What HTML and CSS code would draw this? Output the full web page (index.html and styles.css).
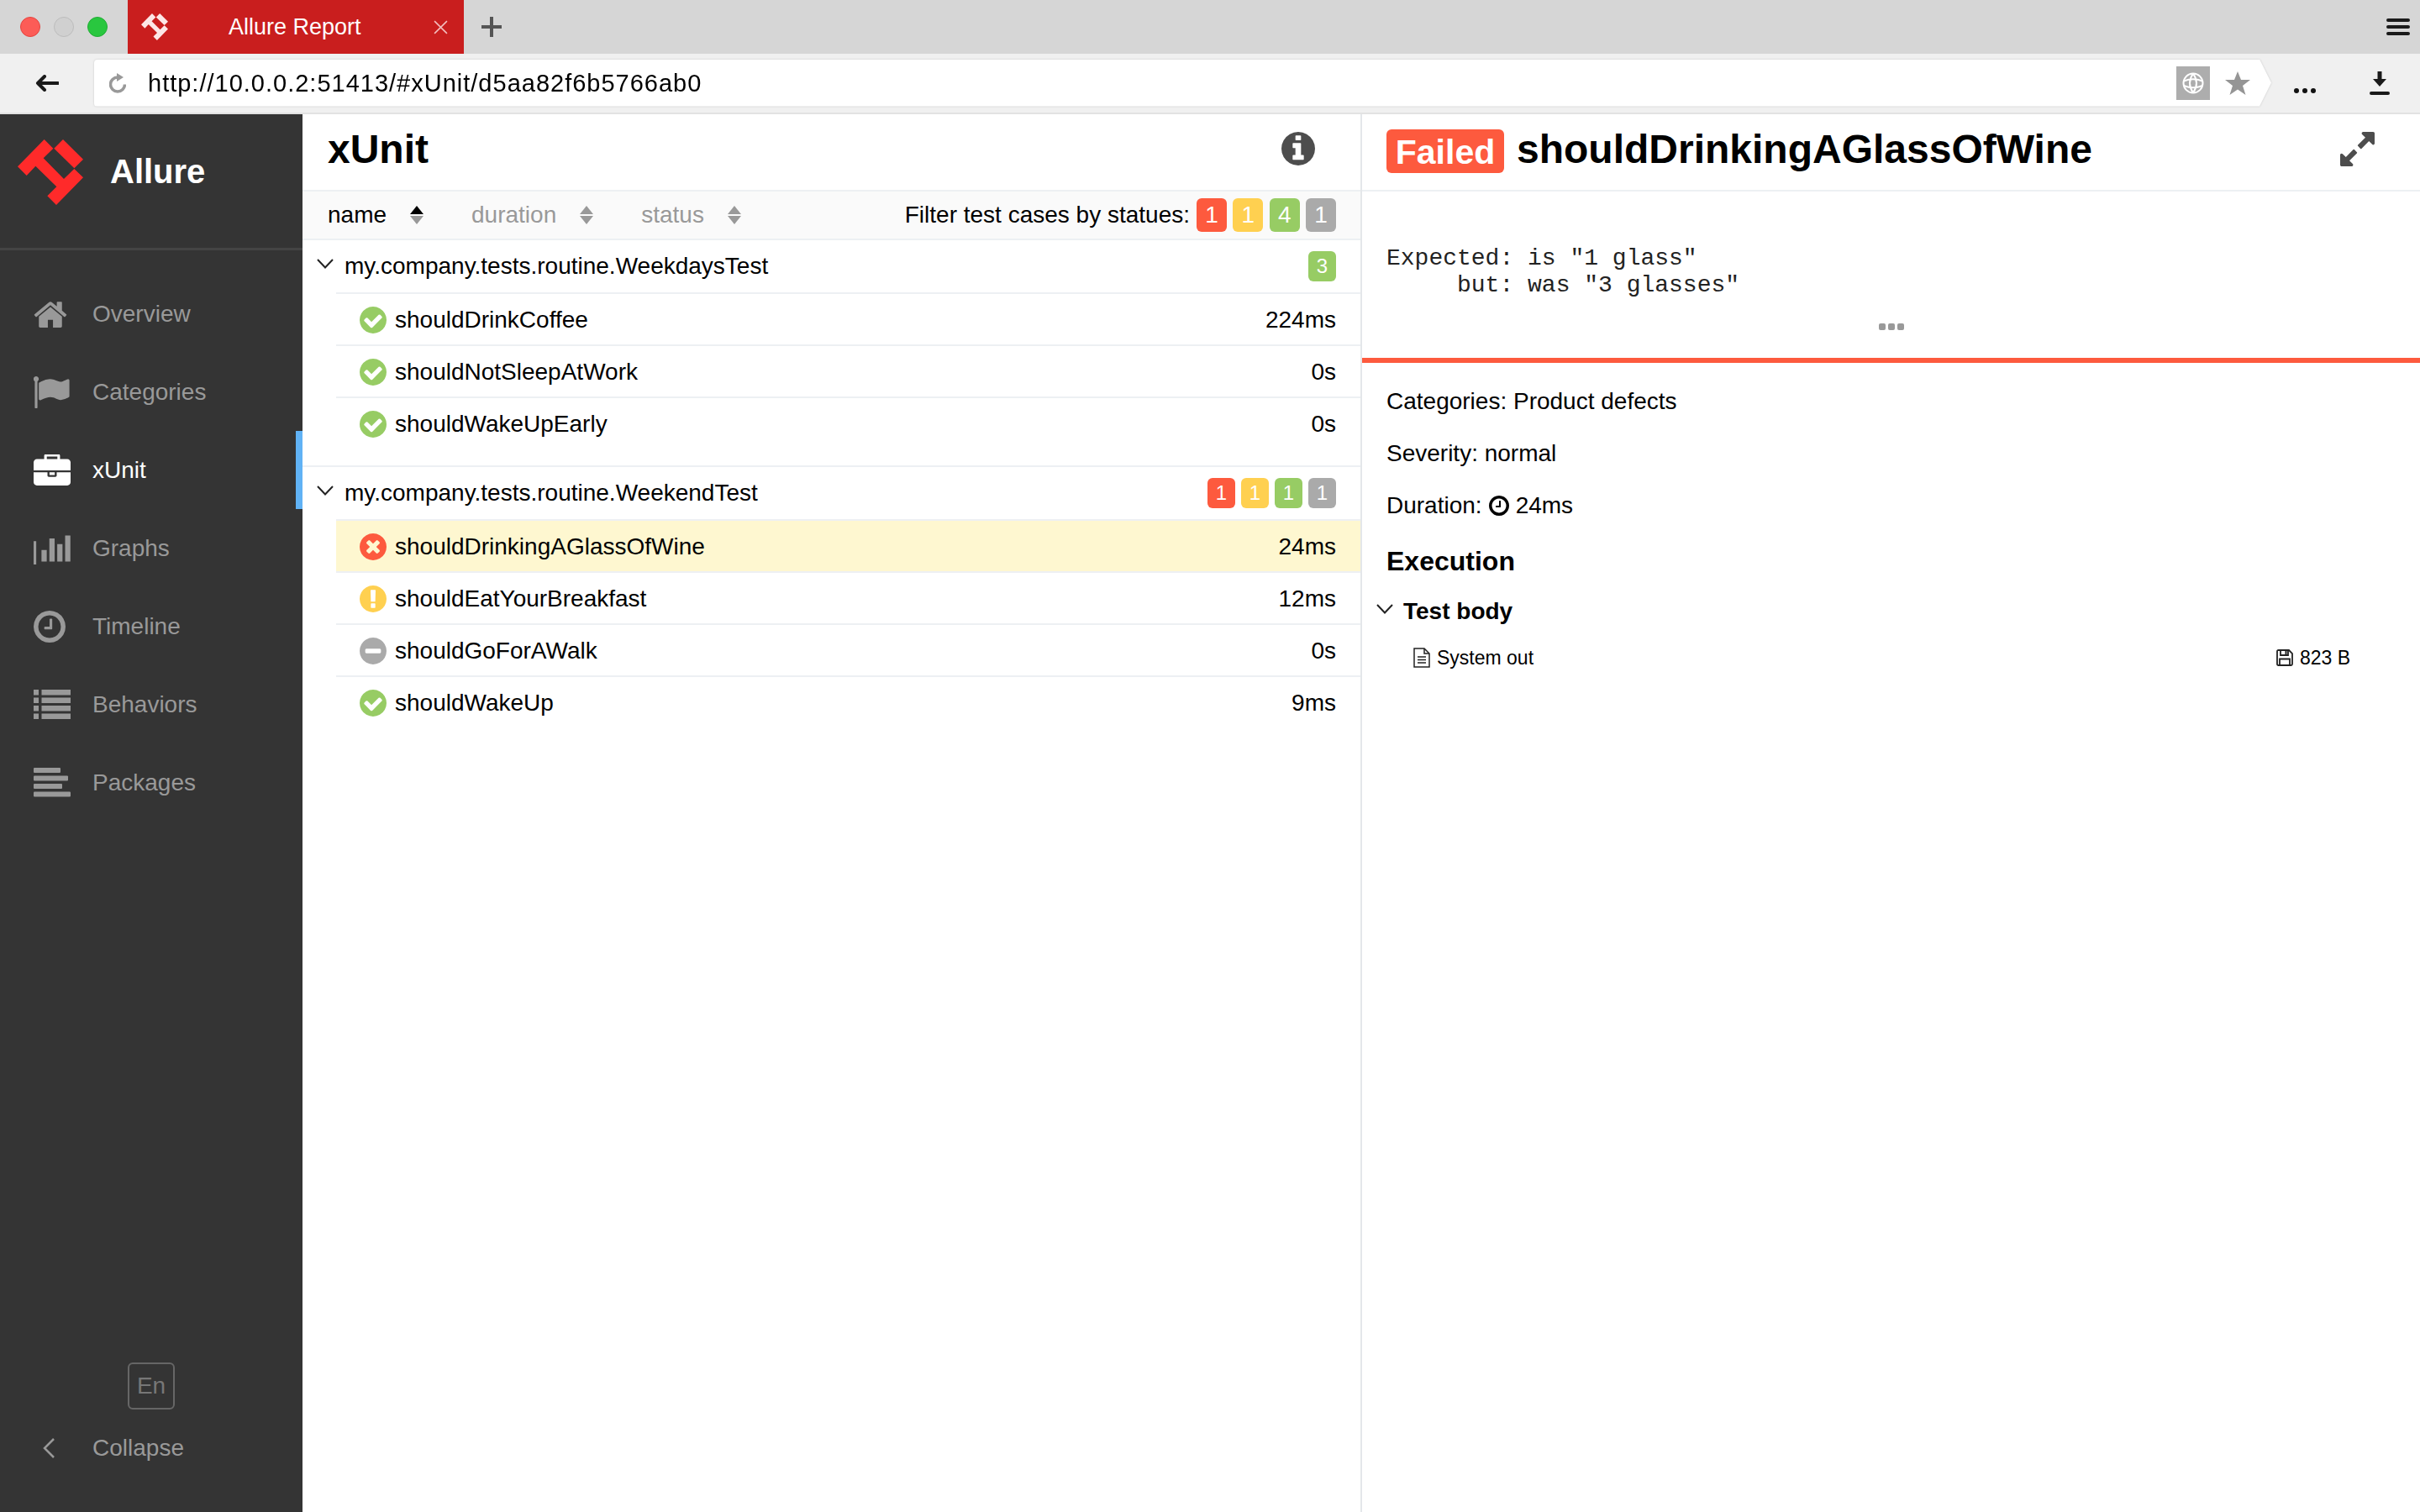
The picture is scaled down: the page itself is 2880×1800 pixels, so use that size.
FILE: index.html
```html
<!DOCTYPE html>
<html lang="en">
<head>
  <meta charset="UTF-8" />
  <title>Allure Report</title>
  <link rel="stylesheet" href="styles.css">
</head>
<body>
  <svg class="defs" aria-hidden="true">
    <symbol id="logo" viewBox="33 36 234 234">
      <path d="M33 133L128 36L160 68L125 103L198 177L235 141L267 172L171 270L139 238L172 205L97 131L65 165Z" />
      <path d="M163 68L195 36L267 107L235 139Z" />
    </symbol>
    <symbol id="check" viewBox="128 128 1536 1536">
      <path d="M1412 734q0-28-18-46l-91-90q-19-19-45-19t-45 19l-408 407-226-226q-19-19-45-19t-45 19l-91 90q-18 18-18 46 0 27 18 45l362 362q19 19 45 19 27 0 46-19l543-543q18-18 18-45zm252 162q0 209-103 385.500t-279.500 279.500-385.500 103-385.500-103-279.500-279.500-103-385.500 103-385.500 279.500-279.500 385.500-103 385.500 103 279.500 279.500 103 385.500z" />
    </symbol>
    <symbol id="times" viewBox="128 128 1536 1536">
      <path d="M1277 1122q0-26-19-45l-181-181 181-181q19-19 19-45 0-27-19-46l-90-90q-19-19-46-19-26 0-45 19l-181 181-181-181q-19-19-45-19-27 0-46 19l-90 90q-19 19-19 46 0 26 19 45l181 181-181 181q-19 19-19 45 0 27 19 46l90 90q19 19 46 19 26 0 45-19l181-181 181 181q19 19 45 19 27 0 46-19l90-90q19-19 19-46zm387-226q0 209-103 385.500t-279.500 279.500-385.500 103-385.500-103-279.500-279.500-103-385.500 103-385.500 279.500-279.500 385.500-103 385.500 103 279.500 279.500 103 385.500z" />
    </symbol>
    <symbol id="exclaim" viewBox="128 128 1536 1536">
      <path d="M896 128q209 0 385.500 103t279.500 279.500 103 385.500-103 385.500-279.500 279.500-385.500 103-385.500-103-279.500-279.500-103-385.500 103-385.500 279.500-279.500 385.500-103zm128 1247v-190q0-14-9-23.500t-22-9.500h-192q-13 0-23 10t-10 23v190q0 13 10 23t23 10h192q13 0 22-9.500t9-23.500zm-2-344l18-621q0-12-10-18-10-8-24-8h-220q-14 0-24 8-10 6-10 18l17 621q0 10 10 17.500t24 7.500h185q14 0 23.500-7.500t10.500-17.500z" />
    </symbol>
    <symbol id="minus" viewBox="128 128 1536 1536">
      <path d="M1344 960v-128q0-26-19-45t-45-19h-768q-26 0-45 19t-19 45v128q0 26 19 45t45 19h768q26 0 45-19t19-45zm320-64q0 209-103 385.500t-279.500 279.500-385.500 103-385.500-103-279.500-279.500-103-385.500 103-385.500 279.500-279.500 385.500-103 385.500 103 279.500 279.500 103 385.500z" />
    </symbol>
    <symbol id="clock" viewBox="128 128 1536 1536">
      <path d="M1024 544v448q0 14-9 23t-23 9h-320q-14 0-23-9t-9-23v-64q0-14 9-23t23-9h224v-352q0-14 9-23t23-9h64q14 0 23 9t9 23zm416 352q0-148-73-273t-198-198-273-73-273 73-198 198-73 273 73 273 198 198 273 73 273-73 198-198 73-273zm224 0q0 209-103 385.500t-279.500 279.500-385.500 103-385.500-103-279.500-279.500-103-385.500 103-385.500 279.500-279.500 385.500-103 385.500 103 279.500 279.500 103 385.500z" />
    </symbol>
    <symbol id="sort" viewBox="0 0 16 22">
      <path class="sort-up" d="M8 0L16 10H0Z" />
      <path class="sort-down" d="M0 12H16L8 22Z" />
    </symbol>
    <symbol id="chevron" viewBox="0 0 20 12">
      <path d="M1 1L10 10.500L19 1" fill="none" stroke="currentColor" stroke-width="2" />
    </symbol>
  </svg>

  <div class="browser-tabs">
    <div class="lights">
      <span class="light light-red"></span>
      <span class="light light-off"></span>
      <span class="light light-green"></span>
    </div>
    <div class="tab">
      <svg class="tab-logo"><use href="#logo" /></svg>
      <span class="tab-title">Allure Report</span>
      <svg class="tab-close" viewBox="0 0 16 16"><path d="M1 1L15 15M15 1L1 15" /></svg>
    </div>
    <svg class="tab-new" viewBox="0 0 24 24"><path d="M12 0V24M0 12H24" /></svg>
    <svg class="burger" viewBox="0 0 28 20"><path d="M2 2H26M2 10H26M2 18H26" /></svg>
  </div>

  <div class="browser-toolbar">
    <svg class="back" viewBox="0 0 28 20"><path d="M27 10H3M11 2L3 10L11 18" /></svg>
    <div class="address-wrap">
      <div class="address">
        <svg class="reload" viewBox="0 0 20 24"><path class="reload-arc" d="M10 5A8.500 8.500 0 1 0 18.500 13.500" /><path class="reload-head" d="M9 0L17 5L9 10Z" /></svg>
        <span class="url">http://10.0.0.2:51413/#xUnit/d5aa82f6b5766ab0</span>
        <span class="globe">
          <svg viewBox="0 0 26 26"><circle cx="13" cy="13" r="11.500" /><path d="M2 10.500Q13 6 24 10.500M2 16Q13 20.500 24 16M13 1.500Q5 13 13 24.500M13 1.500Q21 13 13 24.500" /></svg>
        </span>
        <svg class="star" viewBox="0 0 30 28"><path d="M15 0L19 10H30L21 17L24.500 28L15 21.500L5.500 28L9 17L0 10H11Z" /></svg>
      </div>
    </div>
    <svg class="more" viewBox="0 0 26 6"><circle cx="3" cy="3" r="3" /><circle cx="13" cy="3" r="3" /><circle cx="23" cy="3" r="3" /></svg>
    <svg class="download" viewBox="0 0 24 28"><path d="M9.500 0H14.500V9H20L12 18L4 9H9.500Z" /><rect y="24" width="24" height="4" rx="2" /></svg>
  </div>

  <div class="app">
    <aside class="sidebar">
      <div class="brand">
        <svg class="brand-logo"><use href="#logo" /></svg>
        <span class="brand-name">Allure</span>
      </div>
      <nav class="nav">
        <a class="nav-item">
          <span class="nav-icon"><svg class="icon-home" viewBox="64 200 1664 1340"><path d="M1472 992v480q0 26-19 45t-45 19h-384v-384h-256v384h-384q-26 0-45-19t-19-45v-480q0-1 .5-3t.5-3l575-474 575 474q1 2 1 6zm223-69l-62 74q-8 9-21 11h-3q-13 0-21-7l-692-577-692 577q-12 8-24 7-13-2-21-11l-62-74q-8-10-7-23.500t11-21.500l719-599q32-26 76-26t76 26l244 204v-195q0-14 9-23t23-9h192q14 0 23 9t9 23v408l219 182q10 8 11 21.500t-7 23.500z" /></svg></span>
          Overview
        </a>
        <a class="nav-item">
          <span class="nav-icon"><svg class="icon-flag" viewBox="128 128 1664 1536"><path d="M320 256q0 72-64 110v1266q0 13-9.500 22.500t-22.500 9.500h-64q-13 0-22.500-9.500t-9.500-22.500v-1266q-64-38-64-110 0-53 37.500-90.500t90.500-37.500 90.500 37.500 37.500 90.500zm1472 64v763q0 25-12.500 38.500t-39.500 27.500q-215 116-369 116-61 0-123.500-22t-108.500-48-115.500-48-142.500-22q-192 0-464 146-17 9-33 9-26 0-45-19t-19-45v-742q0-32 31-55 21-14 79-43 236-120 421-120 107 0 200 29t219 88q38 19 88 19 54 0 117.500-21t110-47 88-47 54.500-21q26 0 45 19t19 45z" /></svg></span>
          Categories
        </a>
        <a class="nav-item nav-item-active">
          <span class="nav-icon"><svg class="icon-case" viewBox="0 32 1792 1504"><path d="M640 256h512v-128h-512v128zm1152 640v480q0 66-47 113t-113 47h-1472q-66 0-113-47t-47-113v-480h672v160q0 26 19 45t45 19h320q26 0 45-19t19-45v-160h672zm-768 0v128h-256v-128h256zm768-480v384h-1792v-384q0-66 47-113t113-47h352v-160q0-40 28-68t68-28h576q40 0 68 28t28 68v160h352q66 0 113 47t47 113z" /></svg></span>
          xUnit
        </a>
        <a class="nav-item">
          <span class="nav-icon"><svg class="icon-chart" viewBox="0 128 2048 1408" preserveAspectRatio="none"><path d="M640 896v512h-256v-512h256zm384-512v1024h-256v-1024h256zm1024 1152v128h-2048v-1152h128v1024h1920zm-640-896v768h-256v-768h256zm384-384v1152h-256v-1152h256z" /></svg></span>
          Graphs
        </a>
        <a class="nav-item">
          <span class="nav-icon"><svg class="icon-clock"><use href="#clock" /></svg></span>
          Timeline
        </a>
        <a class="nav-item">
          <span class="nav-icon"><svg class="icon-list" viewBox="0 0 44 35"><rect width="6" height="6.500" /><rect x="9.500" width="34.500" height="6.500" /><rect y="9.500" width="6" height="6.500" /><rect x="9.500" y="9.500" width="34.500" height="6.500" /><rect y="19" width="6" height="6.500" /><rect x="9.500" y="19" width="34.500" height="6.500" /><rect y="28.500" width="6" height="6.500" /><rect x="9.500" y="28.500" width="34.500" height="6.500" /></svg></span>
          Behaviors
        </a>
        <a class="nav-item">
          <span class="nav-icon"><svg class="icon-align" viewBox="0 0 44 35"><rect width="32" height="6" rx="1" /><rect y="9.500" width="41" height="6" rx="1" /><rect y="19" width="34" height="6" rx="1" /><rect y="28.500" width="44" height="6" rx="1" /></svg></span>
          Packages
        </a>
      </nav>
      <div class="sidebar-footer">
        <span class="lang">En</span>
        <a class="collapse">
          <span class="nav-icon"><svg class="icon-back" viewBox="0 0 14 24"><path d="M13 1L2 12L13 23" /></svg></span>
          Collapse
        </a>
      </div>
    </aside>

    <main class="tests">
      <header class="pane-title">
        <h1>xUnit</h1>
        <svg class="info" viewBox="128 128 1536 1536"><path d="M1152 1376v-160q0-14-9-23t-23-9h-96v-512q0-14-9-23t-23-9h-320q-14 0-23 9t-9 23v160q0 14 9 23t23 9h96v320h-96q-14 0-23 9t-9 23v160q0 14 9 23t23 9h448q14 0 23-9t9-23zm-128-896v-160q0-14-9-23t-23-9h-192q-14 0-23 9t-9 23v160q0 14 9 23t23 9h192q14 0 23-9t9-23zm640 416q0 209-103 385.500t-279.500 279.500-385.500 103-385.500-103-279.500-279.500-103-385.500 103-385.500 279.500-279.500 385.500-103 385.500 103 279.500 279.500 103 385.500z" /></svg>
      </header>
      <div class="sortbar">
        <span class="sort sort-active">name <svg class="sort-icon"><use href="#sort" /></svg></span>
        <span class="sort">duration <svg class="sort-icon"><use href="#sort" /></svg></span>
        <span class="sort">status <svg class="sort-icon"><use href="#sort" /></svg></span>
        <span class="filter-label">Filter test cases by statues:</span>
        <div class="filter-badges">
          <span class="badge failed">1</span>
          <span class="badge broken">1</span>
          <span class="badge passed">4</span>
          <span class="badge skipped">1</span>
        </div>
      </div>

      <section class="group">
        <div class="group-head">
          <svg class="chevron"><use href="#chevron" /></svg>
          <span class="group-name">my.company.tests.routine.WeekdaysTest</span>
          <div class="group-badges">
            <span class="badge small passed">3</span>
          </div>
        </div>
        <div class="row"><svg class="status text-passed"><use href="#check" /></svg><span class="row-name">shouldDrinkCoffee</span><span class="row-time">224ms</span></div>
        <div class="row"><svg class="status text-passed"><use href="#check" /></svg><span class="row-name">shouldNotSleepAtWork</span><span class="row-time">0s</span></div>
        <div class="row"><svg class="status text-passed"><use href="#check" /></svg><span class="row-name">shouldWakeUpEarly</span><span class="row-time">0s</span></div>
      </section>

      <section class="group">
        <div class="group-head">
          <svg class="chevron"><use href="#chevron" /></svg>
          <span class="group-name">my.company.tests.routine.WeekendTest</span>
          <div class="group-badges">
            <span class="badge small failed">1</span>
            <span class="badge small broken">1</span>
            <span class="badge small passed">1</span>
            <span class="badge small skipped">1</span>
          </div>
        </div>
        <div class="row row-selected"><svg class="status text-failed"><use href="#times" /></svg><span class="row-name">shouldDrinkingAGlassOfWine</span><span class="row-time">24ms</span></div>
        <div class="row"><svg class="status text-broken"><use href="#exclaim" /></svg><span class="row-name">shouldEatYourBreakfast</span><span class="row-time">12ms</span></div>
        <div class="row"><svg class="status text-skipped"><use href="#minus" /></svg><span class="row-name">shouldGoForAWalk</span><span class="row-time">0s</span></div>
        <div class="row"><svg class="status text-passed"><use href="#check" /></svg><span class="row-name">shouldWakeUp</span><span class="row-time">9ms</span></div>
      </section>
    </main>

    <section class="detail">
      <header class="detail-title">
        <span class="failed-tag">Failed</span>
        <h2>shouldDrinkingAGlassOfWine</h2>
        <svg class="expand" viewBox="128 128 1536 1536"><path d="M883 1056q0 13-10 23l-332 332 144 144q19 19 19 45t-19 45-45 19h-448q-26 0-45-19t-19-45v-448q0-26 19-45t45-19 45 19l144 144 332-332q10-10 23-10t23 10l114 114q10 10 10 23zm781-864v448q0 26-19 45t-45 19-45-19l-144-144-332 332q-10 10-23 10t-23-10l-114-114q-10-10-10-23t10-23l332-332-144-144q-19-19-19-45t19-45 45-19h448q26 0 45 19t19 45z" /></svg>
      </header>
      <div class="message">
        <pre>Expected: is "1 glass"
     but: was "3 glasses"</pre>
        <svg class="message-more" viewBox="0 0 30 8"><rect width="8" height="8" rx="2" /><rect x="11" width="8" height="8" rx="2" /><rect x="22" width="8" height="8" rx="2" /></svg>
      </div>
      <div class="info-line">Categories: Product defects</div>
      <div class="info-line">Severity: normal</div>
      <div class="info-line">Duration: <svg class="clock-small"><use href="#clock" /></svg> 24ms</div>
      <h3 class="execution">Execution</h3>
      <div class="step">
        <svg class="chevron"><use href="#chevron" /></svg>
        <span>Test body</span>
      </div>
      <div class="attachment">
        <svg class="file" viewBox="0 0 20 24"><path d="M1 1H13L19 7V23H1Z" /><path d="M13 1V7H19M5 11H15M5 14.500H15M5 18H15" /></svg>
        <span>System out</span>
        <span class="size">
          <svg class="disk" viewBox="0 0 20 20"><path d="M1 2.500Q1 1 2.500 1H15L19 5V17.500Q19 19 17.500 19H2.500Q1 19 1 17.500Z" /><path d="M5 1V7H14V1M4 19V11.500H16V19" /><rect class="disk-slot" x="10.500" y="2" width="2" height="4" /></svg>
          823 B
        </span>
      </div>
    </section>
  </div>
</body>
</html>
```

FILE: styles.css
```css
* { margin: 0; padding: 0; box-sizing: border-box; }
html, body { height: 100%; }
body {
  font-family: "Liberation Sans", Arial, sans-serif;
  font-size: 28px;
  color: #000;
  background: #fff;
  overflow: hidden;
  display: flex;
  flex-direction: column;
}
svg { display: block; flex: none; fill: currentColor; }
.defs { width: 0; height: 0; position: absolute; }

/* browser chrome */
.browser-tabs {
  height: 64px; flex: none; background: #d6d6d6;
  display: flex; align-items: center; padding-left: 24px;
}
.lights { display: flex; gap: 16px; margin-right: 24px; }
.light { width: 24px; height: 24px; border-radius: 50%; border: 1px solid; }
.light-red { background: #fc5c57; border-color: #e5443f; }
.light-off { background: #d0d0d0; border-color: #bcbcbc; }
.light-green { background: #29c73f; border-color: #20ad34; }
.tab {
  width: 400px; height: 64px; background: #c91e1e; color: #fff;
  display: flex; align-items: center; padding: 0 19px 0 16px;
}
.tab-logo { width: 32px; height: 32px; color: #fde6e6; margin-right: 72px; }
.tab-title { font-size: 27px; }
.tab-close { width: 17px; height: 17px; margin-left: auto; fill: none; stroke: #f3bcbc; stroke-width: 1.5; }
.tab-new { width: 24px; height: 24px; margin-left: 21px; fill: none; stroke: #555; stroke-width: 4; }
.burger { width: 28px; height: 20px; margin-left: auto; margin-right: 12px; fill: none; stroke: #1a1a1a; stroke-width: 4; stroke-linecap: round; }

.browser-toolbar {
  height: 72px; flex: none; background: #f0f0f0; border-bottom: 2px solid #e2e2e2;
  display: flex; align-items: center; padding-left: 42px; padding-right: 36px;
}
.back { width: 28px; height: 20px; margin-right: 42px; fill: none; stroke: #1a1a1a; stroke-width: 4; stroke-linecap: round; stroke-linejoin: round; }
.address-wrap { flex: 1; filter: drop-shadow(0 0 1px #c8c8c8); margin-bottom: 1px; }
.address {
  height: 56px; background: #fff; border-radius: 4px 0 0 4px;
  display: flex; align-items: center; padding: 0 25px 0 18px;
  clip-path: polygon(0 0, calc(100% - 14px) 0, 100% 50%, calc(100% - 14px) 100%, 0 100%);
}
.reload { width: 20px; height: 24px; margin-right: 26px; }
.reload-arc { fill: none; stroke: #999; stroke-width: 3.5; }
.reload-head { fill: #999; }
.url { font-size: 29px; letter-spacing: 1px; flex: 1; padding-top: 2px; }
.globe {
  width: 40px; height: 40px; background: #adadad; margin-right: 18px;
  display: flex; align-items: center; justify-content: center;
}
.globe svg { width: 26px; height: 26px; fill: none; stroke: #fff; stroke-width: 2; }
.star { width: 30px; height: 28px; color: #959595; }
.more { width: 26px; height: 6px; margin: 18px 64px 0 27px; color: #111; }
.download { width: 24px; height: 28px; color: #1a1a1a; }

/* sidebar */
.app { flex: 1; display: flex; min-height: 0; }
.sidebar {
  width: 360px; flex: none; background: #343434; color: #999;
  display: flex; flex-direction: column;
}
.brand {
  height: 162px; flex: none; border-bottom: 3px solid #444;
  display: flex; align-items: center; padding: 0 0 22px 21px;
}
.brand-logo { width: 78px; height: 78px; color: #ff2a2a; margin-right: 32px; }
.brand-name { font-size: 40px; font-weight: bold; color: #fff; }
.nav { padding-top: 29px; }
.nav-item {
  height: 93px; display: flex; align-items: center; padding-left: 40px;
  border-right: 8px solid transparent;
}
.nav-item-active { color: #fff; border-right-color: #60b2f5; }
.nav-icon { width: 70px; flex: none; display: flex; }
.icon-home { width: 40px; height: 32px; }
.icon-flag { width: 44px; height: 38px; }
.icon-case { width: 44px; height: 37px; }
.icon-chart { width: 50px; height: 38px; }
.icon-clock { width: 38px; height: 38px; }
.icon-list { width: 44px; height: 35px; }
.icon-align { width: 44px; height: 35px; }
.sidebar-footer {
  margin-top: auto; padding-bottom: 48px;
  display: flex; flex-direction: column; align-items: center; gap: 18px;
}
.lang {
  width: 56px; height: 56px; border: 2px solid #666; border-radius: 6px; color: #777;
  display: flex; align-items: center; justify-content: center;
}
.collapse { align-self: stretch; height: 56px; display: flex; align-items: center; padding-left: 51px; }
.collapse .nav-icon { width: 59px; }
.icon-back { width: 14px; height: 24px; fill: none; stroke: #999; stroke-width: 2.500; }

/* test list */
.tests { width: 1259px; flex: none; }
.pane-title, .detail-title {
  height: 92px; border-bottom: 2px solid #edf0f3;
  display: flex; align-items: center; padding-bottom: 8px;
}
.pane-title { padding-left: 30px; padding-right: 54px; justify-content: space-between; }
.pane-title h1 { font-size: 48px; }
.info { width: 40px; height: 40px; color: #4d4d4d; }
.sortbar {
  height: 58px; background: #fafafa; border-bottom: 2px solid #edf0f3;
  display: flex; align-items: center; padding: 0 29px 0 30px;
}
.sort { display: flex; align-items: center; gap: 28px; margin-right: 57px; color: #999; }
.sort-active { color: #000; }
.sort-icon { width: 16px; height: 22px; }
.sort-icon { color: #999; }
.sort-active .sort-icon use { color: #000; }
.sort-up { fill: currentColor; }
.sort-down { fill: #999; }
.filter-label { margin-left: auto; margin-right: 8px; }
.filter-badges { display: flex; gap: 7.330px; }
.group-badges { display: flex; gap: 7px; margin-left: auto; }
.badge {
  width: 36px; height: 40px; border-radius: 6px; color: #fff;
  display: flex; align-items: center; justify-content: center;
}
.badge.small { width: 33px; height: 36px; font-size: 24px; }
.failed { background: #fd5a3e; }
.broken { background: #ffd050; }
.passed { background: #97cc64; }
.skipped { background: #aaa; }
.text-failed { color: #fd5a3e; }
.text-broken { color: #ffd050; }
.text-passed { color: #97cc64; }
.text-skipped { color: #aaa; }

.group { padding-bottom: 20px; }
.group + .group { border-top: 2px solid #edf0f3; }
.group-head { height: 62px; display: flex; align-items: center; padding: 0 29px 0 17px; }
.chevron { width: 20px; height: 12px; margin-bottom: 6px; color: #222; }
.group-name { margin-left: 13px; }
.row {
  height: 62px; margin-left: 40px; border-top: 2px solid #edf0f3;
  display: flex; align-items: center; padding: 2px 29px 0 28px;
}
.row-selected { background: #fef7d0; }
.status { width: 32px; height: 32px; margin-right: 10px; }
.row-time { margin-left: auto; }

/* test detail */
.detail { flex: 1; border-left: 2px solid #e4e7ea; }
.detail-title { padding-left: 29px; padding-right: 54px; }
.failed-tag {
  width: 140px; height: 52px; background: #fd5a3e; color: #fff; border-radius: 6px;
  font-size: 41px; font-weight: bold; margin: 6px 15px 0 0; padding-top: 2px;
  display: flex; align-items: center; justify-content: center;
}
.detail-title h2 { font-size: 48px; }
.expand { width: 41px; height: 41px; margin-left: auto; color: #4d4d4d; }
.message { height: 204px; padding: 64px 29px 0; margin-bottom: 15px; border-bottom: 6px solid #fd5a3e; }
.message pre { font-family: "Liberation Mono", "Courier New", monospace; font-size: 28px; line-height: 32px; color: #222; }
.message-more { width: 30px; height: 8px; margin: 29px auto 0; color: #999; }
.info-line { height: 62px; display: flex; align-items: center; padding-left: 29px; gap: 8px; }
.clock-small { width: 24px; height: 24px; }
.execution { height: 70px; display: flex; align-items: center; padding-left: 29px; font-size: 32px; }
.step { height: 50px; display: flex; align-items: center; padding-left: 17px; font-weight: bold; }
.step .chevron { margin-right: 12px; margin-bottom: 6px; }
.attachment {
  height: 50px; margin-top: 5px; padding: 0 83px 0 61px;
  display: flex; align-items: center; font-size: 23px;
}
.file { width: 20px; height: 24px; margin-right: 8px; fill: none; stroke: #222; stroke-width: 1.500; }
.size { margin-left: auto; display: flex; align-items: center; gap: 8px; }
.disk { width: 20px; height: 20px; fill: none; stroke: #222; stroke-width: 1.800; }
.disk-slot { fill: #222; stroke: none; }
```
